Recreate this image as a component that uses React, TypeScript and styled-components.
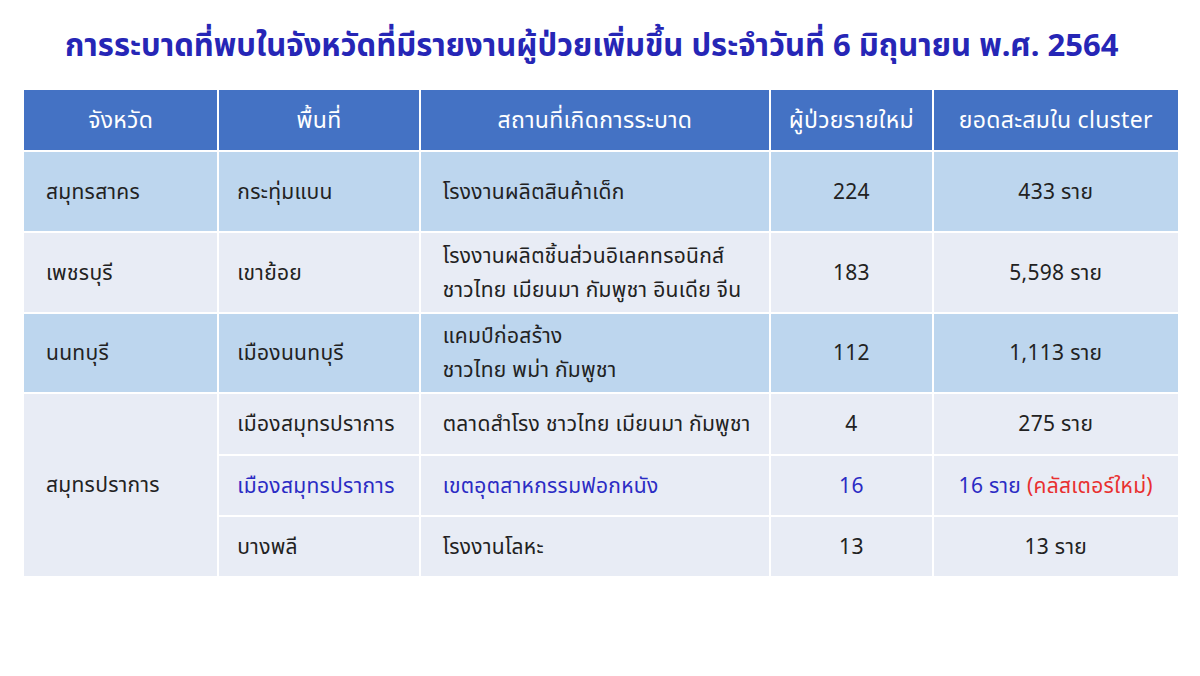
import React from 'react';
import styled, { createGlobalStyle } from 'styled-components';

const GlobalStyle = createGlobalStyle`
  html, body {
    margin: 0;
    padding: 0;
    background: #fff;
  }
  body {
    font-family: Tahoma, "Noto Sans", "Noto Sans Thai", "DejaVu Sans", sans-serif;
  }
`;

const Page = styled.div`
  width: 1200px;
  height: 676px;
  padding: 22px 0 0 22px;
  box-sizing: border-box;
  background: #fff;
`;

const Title = styled.h1`
  margin: 0 0 22px 43px;
  font-size: 31px;
  line-height: 44px;
  font-weight: 700;
  color: #2626b6;
  white-space: nowrap;
`;

// separate borders so each cell keeps its exact size, white gaps act as grid lines
const Table = styled.table`
  width: 1158px;
  border-collapse: separate;
  border-spacing: 2px;
  table-layout: fixed;
  color: #222;
`;

const Th = styled.th<{ w: number }>`
  box-sizing: border-box;
  width: ${p => p.w}px;
  height: 60px;
  background: #4472c4;
  color: #fff;
  font-weight: 400;
  font-size: 23px;
  letter-spacing: 0.3px;
  text-align: center;
  padding: 0;
  white-space: nowrap;
`;

const Td = styled.td<{ tone: 'dark' | 'light'; center?: boolean; h: number; pad?: number }>`
  box-sizing: border-box;
  height: ${p => p.h}px;
  background: ${p => (p.tone === 'dark' ? '#bdd6ee' : '#e8ecf5')};
  text-align: ${p => (p.center ? 'center' : 'left')};
  padding: 0 0 2px ${p => p.pad ?? 0}px;
  font-size: 21px;
  letter-spacing: 0.3px;
  line-height: 34px;
  vertical-align: middle;
  white-space: nowrap;
`;

const Ink = styled.span<{ c: 'blue' | 'red' }>`
  color: ${p => (p.c === 'blue' ? '#2b2bc4' : '#e83030')};
`;

const cols = [
  { label: 'จังหวัด', w: 195 },
  { label: 'พื้นที่', w: 201 },
  { label: 'สถานที่เกิดการระบาด', w: 350 },
  { label: 'ผู้ป่วยรายใหม่', w: 162 },
  { label: 'ยอดสะสมใน cluster', w: 246 },
];

const P1 = 22;
const P2 = 18;
const P3 = 22;

const App = () => (
  <>
    <GlobalStyle />
    <Page>
      <Title>การระบาดที่พบในจังหวัดที่มีรายงานผู้ป่วยเพิ่มขึ้น ประจำวันที่ 6 มิถุนายน พ.ศ. 2564</Title>
      <Table>
        <thead>
          <tr>
            {cols.map(c => (
              <Th key={c.label} w={c.w - 2}>{c.label}</Th>
            ))}
          </tr>
        </thead>
        <tbody>
          <tr>
            <Td tone='dark' h={79} pad={P1}>สมุทรสาคร</Td>
            <Td tone='dark' h={79} pad={P2}>กระทุ่มแบน</Td>
            <Td tone='dark' h={79} pad={P3}>โรงงานผลิตสินค้าเด็ก</Td>
            <Td tone='dark' h={79} center>224</Td>
            <Td tone='dark' h={79} center>433 ราย</Td>
          </tr>
          <tr>
            <Td tone='light' h={79} pad={P1}>เพชรบุรี</Td>
            <Td tone='light' h={79} pad={P2}>เขาย้อย</Td>
            <Td tone='light' h={79} pad={P3}>
              โรงงานผลิตชิ้นส่วนอิเลคทรอนิกส์
              <br />
              ชาวไทย เมียนมา กัมพูชา อินเดีย จีน
            </Td>
            <Td tone='light' h={79} center>183</Td>
            <Td tone='light' h={79} center>5,598 ราย</Td>
          </tr>
          <tr>
            <Td tone='dark' h={78} pad={P1}>นนทบุรี</Td>
            <Td tone='dark' h={78} pad={P2}>เมืองนนทบุรี</Td>
            <Td tone='dark' h={78} pad={P3}>
              แคมป์ก่อสร้าง
              <br />
              ชาวไทย พม่า กัมพูชา
            </Td>
            <Td tone='dark' h={78} center>112</Td>
            <Td tone='dark' h={78} center>1,113 ราย</Td>
          </tr>
          <tr>
            <Td tone='light' h={60} pad={P1} rowSpan={3}>สมุทรปราการ</Td>
            <Td tone='light' h={60} pad={P2}>เมืองสมุทรปราการ</Td>
            <Td tone='light' h={60} pad={P3}>ตลาดสำโรง ชาวไทย เมียนมา กัมพูชา</Td>
            <Td tone='light' h={60} center>4</Td>
            <Td tone='light' h={60} center>275 ราย</Td>
          </tr>
          <tr>
            <Td tone='light' h={59} pad={P2}><Ink c='blue'>เมืองสมุทรปราการ</Ink></Td>
            <Td tone='light' h={59} pad={P3}><Ink c='blue'>เขตอุตสาหกรรมฟอกหนัง</Ink></Td>
            <Td tone='light' h={59} center><Ink c='blue'>16</Ink></Td>
            <Td tone='light' h={59} center>
              <Ink c='blue'>16 ราย </Ink>
              <Ink c='red'>(คลัสเตอร์ใหม่)</Ink>
            </Td>
          </tr>
          <tr>
            <Td tone='light' h={59} pad={P2}>บางพลี</Td>
            <Td tone='light' h={59} pad={P3}>โรงงานโลหะ</Td>
            <Td tone='light' h={59} center>13</Td>
            <Td tone='light' h={59} center>13 ราย</Td>
          </tr>
        </tbody>
      </Table>
    </Page>
  </>
);

export default App;
